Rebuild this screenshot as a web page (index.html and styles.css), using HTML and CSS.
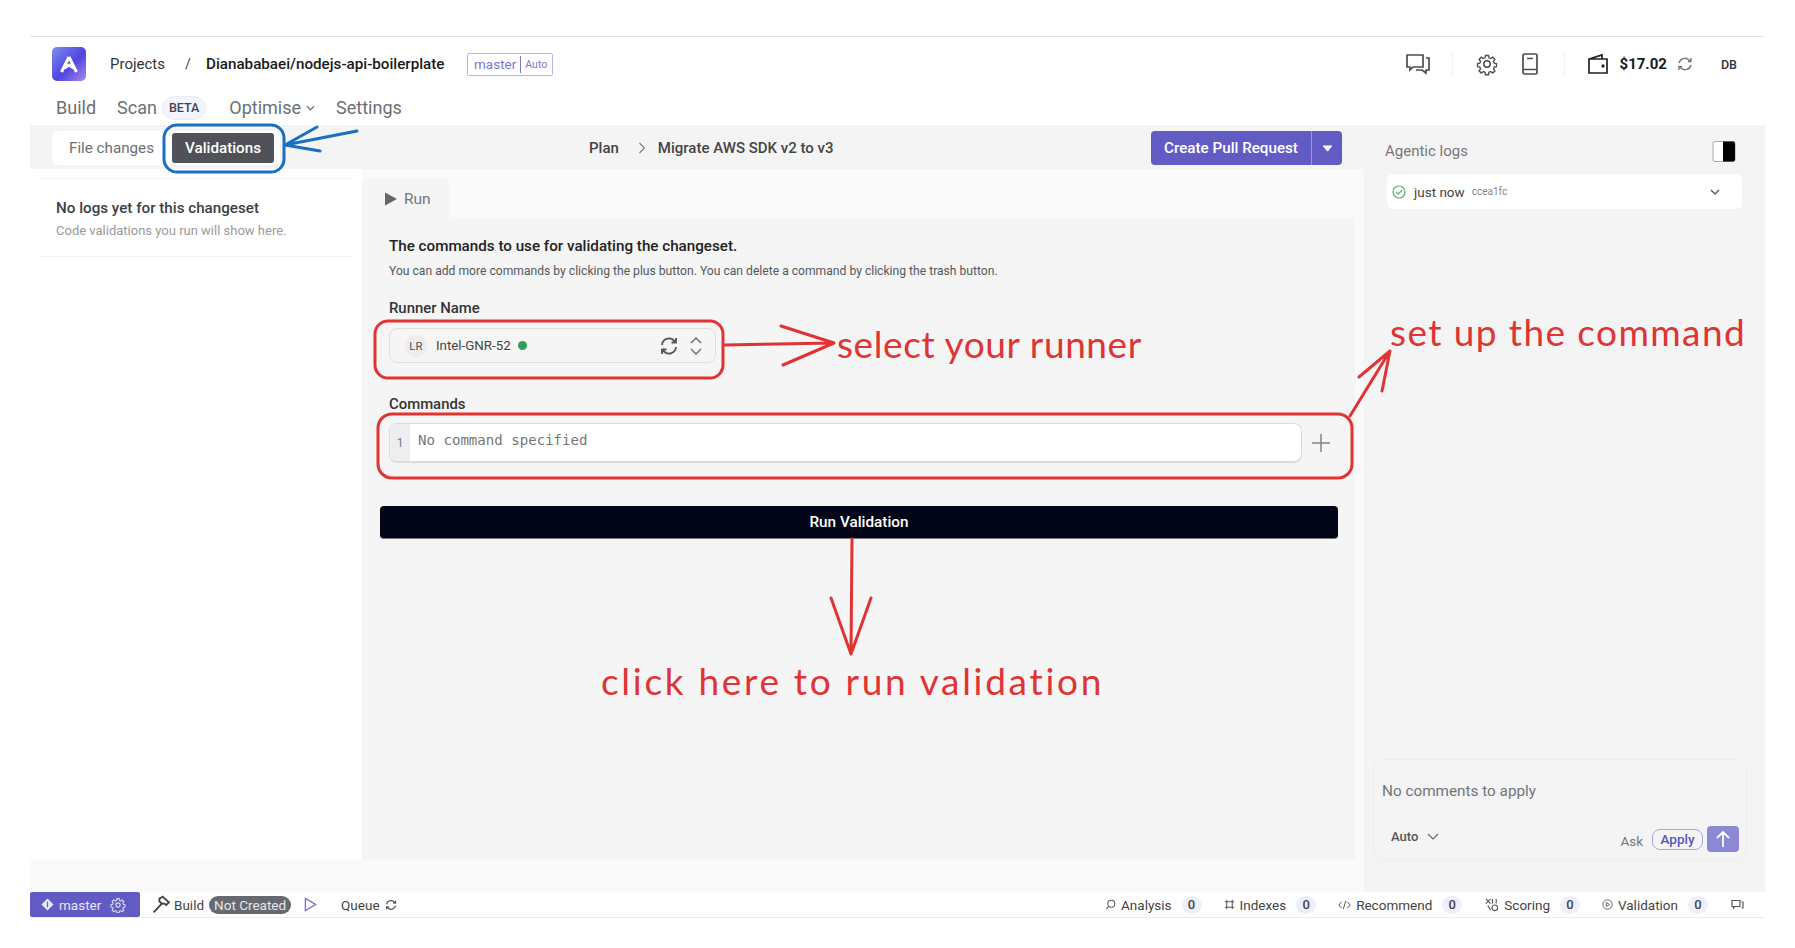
FILE: index.html
```html
<!DOCTYPE html>
<html lang="en">
<head>
<meta charset="utf-8">
<title>Validations</title>
<link rel="stylesheet" href="styles.css">
</head>
<body>
<div class="shell">
  <header class="topbar">
    <div class="logo">
      <svg viewBox="0 0 34 34" width="34" height="34"><defs><linearGradient id="lg" x1="0" y1="0" x2="1" y2="1"><stop offset="0" stop-color="#7f8df0"/><stop offset=".55" stop-color="#4f45e0"/><stop offset="1" stop-color="#a78bea"/></linearGradient></defs><rect width="34" height="34" rx="5" fill="url(#lg)"/><path d="M17 10 L24.500 25 M17 10 L9.500 25 M12.500 21 L17 18 L21.500 21" fill="none" stroke="#fff" stroke-width="3" stroke-linejoin="round"/></svg>
    </div>
    <span class="crumb">Projects</span>
    <span class="slash">/</span>
    <span class="repo">Dianababaei/nodejs-api-boilerplate</span>
    <span class="branch"><span class="branch-name">master</span><span class="branch-mode">Auto</span></span>
    <div class="top-actions">
      <svg class="ico-chat" viewBox="0 0 26 24" width="26" height="24" fill="none" stroke="#4a4d52" stroke-width="1.7"><path d="M2 3h16v12H8l-3 3v-3H2z"/><path d="M21 6h3v12h-3v3l-4-3h-6"/></svg>
      <span class="vline"></span>
      <svg class="ico-gear" viewBox="0 0 24 24" width="24" height="24" fill="none" stroke="#4a4d52" stroke-width="1.5"><circle cx="12" cy="12" r="3.2"/><path d="M10.3 2.5h3.4l.5 2.7 1.9.8 2.3-1.6 2.4 2.4-1.6 2.3.8 1.9 2.5.5v3.4l-2.5.5-.8 1.9 1.6 2.3-2.4 2.4-2.3-1.6-1.9.8-.5 2.7h-3.4l-.5-2.700-1.900-.8-2.300 1.600-2.400-2.400 1.600-2.300-.8-1.900-2.500-.5v-3.400l2.500-.5.8-1.900-1.600-2.300 2.400-2.400 2.300 1.600 1.900-.8z" transform="translate(1.2 1.2) scale(.9)"/></svg>
      <svg class="ico-book" viewBox="0 0 20 24" width="20" height="24" fill="none" stroke="#4a4d52" stroke-width="1.7"><rect x="3" y="2" width="14" height="20" rx="1.5"/><path d="M3 17.500h14M7 6.500h6"/></svg>
      <span class="vline vline-b"></span>
      <svg class="ico-wallet" viewBox="0 0 22 22" width="22" height="22" fill="none" stroke="#222" stroke-width="1.7"><path d="M2 6h18v14H2z M2 6 15 2v4"/><circle cx="16" cy="13" r=".8" fill="#222"/></svg>
      <span class="money">$17.02</span>
      <svg class="ico-sync" viewBox="0 0 16 16" width="16" height="16" fill="none" stroke="#777" stroke-width="1.4"><path d="M2 7a6 6 0 0 1 10-3l2 1.500M14 2v3.500h-3M14 9a6 6 0 0 1-10 3l-2-1.500M2 14v-3.500h3"/></svg>
      <span class="avatar">DB</span>
    </div>
  </header>

  <nav class="tabs">
    <span class="tab">Build</span>
    <span class="tab tab-scan">Scan</span>
    <span class="beta">BETA</span>
    <span class="tab tab-opt">Optimise</span>
    <svg class="chev-small" viewBox="0 0 10 6" width="9" height="6" fill="none" stroke="#666" stroke-width="1.3"><path d="M1 1l4 4 4-4"/></svg>
    <span class="tab tab-set">Settings</span>
  </nav>

  <div class="workspace">
    <div class="center">
      <div class="toolbar">
        <div class="segment">
          <span class="seg-item">File changes</span>
          <span class="seg-item seg-active">Validations</span>
        </div>
        <div class="path">
          <span>Plan</span>
          <svg viewBox="0 0 8 12" width="8" height="12" fill="none" stroke="#777" stroke-width="1.1"><path d="M1.500 1l5 5-5 5"/></svg>
          <span>Migrate AWS SDK v2 to v3</span>
        </div>
        <div class="pr">
          <span class="pr-main">Create Pull Request</span>
          <span class="pr-drop"><svg viewBox="0 0 12 8" width="11" height="7"><path d="M1 1h10L6 7z" fill="#fff" stroke="#fff" stroke-linejoin="round"/></svg></span>
        </div>
      </div>
      <div class="body">
        <aside class="logs">
          <div class="logs-inner">
            <div class="logs-title">No logs yet for this changeset</div>
            <div class="logs-sub">Code validations you run will show here.</div>
          </div>
        </aside>
        <main class="main">
          <div class="run-tab">
            <svg viewBox="0 0 14 14" width="14" height="14"><path d="M1 0.500 13 7 1 13.500z" fill="#666"/></svg>
            <span>Run</span>
          </div>
          <section class="panel">
            <h2 class="p-title">The commands to use for validating the changeset.</h2>
            <p class="p-sub">You can add more commands by clicking the plus button. You can delete a command by clicking the trash button.</p>
            <div class="label label-runner">Runner Name</div>
            <div class="select">
              <span class="lr">LR</span>
              <span class="runner">Intel-GNR-52</span>
              <span class="dot"></span>
              <svg class="sel-sync" viewBox="0 0 20 20" width="20" height="20" fill="none" stroke="#555" stroke-width="1.800"><path d="M3 9a7 7 0 0 1 12-4.500l2 2M17 2v4.500h-4.500M17 11a7 7 0 0 1-12 4.500l-2-2M3 18v-4.500h4.500"/></svg>
              <svg class="sel-updown" viewBox="0 0 12 20" width="12" height="20" fill="none" stroke="#666" stroke-width="1.300"><path d="M1 7l5-5 5 5M1 13l5 5 5-5"/></svg>
            </div>
            <div class="label label-cmd">Commands</div>
            <div class="cmd-row">
              <div class="editor">
                <span class="gutter">1</span>
                <span class="code">No command specified</span>
              </div>
              <svg class="plus" viewBox="0 0 18 18" width="18" height="18" fill="none" stroke="#80848c" stroke-width="1.500"><path d="M9 0v18M0 9h18"/></svg>
            </div>
            <button class="run-btn">Run Validation</button>
          </section>
        </main>
      </div>
    </div>

    <aside class="agent">
      <div class="agent-head">
        <span class="agent-title">Agentic logs</span>
        <svg viewBox="0 0 24 22" width="24" height="23"><rect x="1" y="1" width="22" height="20" rx="2" fill="#fff" stroke="#aaa"/><path d="M11 1h10a2 2 0 0 1 2 2v16a2 2 0 0 1-2 2H11z" fill="#000"/></svg>
      </div>
      <div class="log-card">
        <svg viewBox="0 0 14 14" width="14" height="14" fill="none" stroke="#5cb07a" stroke-width="1.200"><circle cx="7" cy="7" r="6"/><path d="M4 7l2.200 2.200L10 5"/></svg>
        <span class="log-when">just now</span>
        <span class="log-hash">ccea1fc</span>
        <svg class="log-chev" viewBox="0 0 10 6" width="10" height="6" fill="none" stroke="#555" stroke-width="1.400"><path d="M1 1l4 4 4-4"/></svg>
      </div>
      <div class="composer">
        <div class="composer-text">No comments to apply</div>
        <div class="composer-row">
          <span class="auto">Auto</span>
          <svg class="auto-chev" viewBox="0 0 12 7" width="12" height="7" fill="none" stroke="#666" stroke-width="1.200"><path d="M1 1l5 5 5-5"/></svg>
          <span class="ask">Ask</span>
          <span class="apply">Apply</span>
          <span class="send"><svg viewBox="0 0 16 18" width="16" height="18" fill="none" stroke="#fff" stroke-width="1.800"><path d="M8 17V2M2 8l6-6 6 6"/></svg></span>
        </div>
      </div>
    </aside>
  </div>

  <footer class="status">
    <div class="st-branch">
      <svg viewBox="0 0 14 14" width="13" height="13"><path d="M7 0.500 13.500 7 7 13.500 0.500 7z" fill="#e8e6fa"/><path d="M7 4v6" stroke="#625bc4" stroke-width="1.300"/></svg>
      <span class="st-master">master</span>
      <svg class="st-gear" viewBox="0 0 24 24" width="16" height="16" fill="none" stroke="#d8d6f4" stroke-width="1.700"><circle cx="12" cy="12" r="3.200"/><path d="M10.300 2.500h3.400l.5 2.700 1.900.8 2.300-1.600 2.400 2.400-1.600 2.300.8 1.900 2.500.5v3.400l-2.500.5-.8 1.900 1.600 2.300-2.400 2.400-2.300-1.600-1.900.8-.5 2.700h-3.400l-.5-2.700-1.900-.8-2.300 1.600-2.400-2.400 1.600-2.300-.8-1.900-2.500-.5v-3.400l2.500-.5.8-1.900-1.600-2.300 2.400-2.400 2.300 1.600 1.900-.8z"/></svg>
    </div>
    <svg class="st-hammer" viewBox="0 0 18 18" width="19" height="19" fill="none" stroke="#444" stroke-width="1.800"><path d="M1.500 16.500 10 7.500M7 3.500l3-2 6 5.500-2.500 2.500-2-1.500-2 .5-2.500-2.500z"/></svg>
    <span class="st-build">Build</span>
    <span class="st-pill">Not Created</span>
    <svg class="st-play" viewBox="0 0 14 16" width="13" height="15" fill="none" stroke="#7a73d8" stroke-width="1.500"><path d="M1.500 1.500 12.500 8 1.500 14.500z"/></svg>
    <span class="st-queue">Queue</span>
    <svg class="st-sync" viewBox="0 0 16 16" width="12" height="12" fill="none" stroke="#555" stroke-width="1.600"><path d="M2 7a6 6 0 0 1 10-3l2 1.500M14 2v3.500h-3M14 9a6 6 0 0 1-10 3l-2-1.500M2 14v-3.500h3"/></svg>
    <div class="st-right">
      <span class="st-item"><svg viewBox="0 0 14 14" width="11" height="11" fill="none" stroke="#555" stroke-width="1.300"><circle cx="8" cy="6" r="4.500"/><path d="M5 9.500 1.500 13"/></svg>Analysis<b class="count">0</b></span>
      <span class="st-item"><svg viewBox="0 0 14 14" width="11" height="11" fill="none" stroke="#555" stroke-width="1.300"><path d="M3.500 1v12M10.500 1v12M1 3.500h12M1 10.500h12"/></svg>Indexes<b class="count">0</b></span>
      <span class="st-item"><svg viewBox="0 0 16 12" width="13" height="10" fill="none" stroke="#555" stroke-width="1.200"><path d="M4.500 2 1 6l3.500 4M11.500 2 15 6l-3.500 4M9.500 1l-3 10"/></svg>Recommend<b class="count">0</b></span>
      <span class="st-item"><svg viewBox="0 0 16 16" width="15" height="15" fill="none" stroke="#555" stroke-width="1.200"><path d="M2 2l5 5M7 2 2 7M4 9l3 5M9 2v5M13 2v5"/><circle cx="11.500" cy="11.500" r="3"/></svg>Scoring<b class="count">0</b></span>
      <span class="st-item"><svg viewBox="0 0 14 14" width="11" height="11" fill="none" stroke="#555" stroke-width="1.100"><circle cx="7" cy="7" r="6"/><path d="M5.500 4.500 9.500 7l-4 2.500z"/></svg>Validation<b class="count">0</b></span>
      <svg class="st-chat" viewBox="0 0 26 24" width="13" height="12" fill="none" stroke="#555" stroke-width="2.400"><path d="M2 3h16v12H8l-3 3v-3H2z"/><path d="M21 6h3v12h-3"/></svg>
    </div>
  </footer>
</div>

<div class="notes">
  <svg class="notes-svg" viewBox="0 0 1795 948" width="1795" height="948" fill="none" stroke-linecap="round" stroke-linejoin="round">
    <rect class="n-blue" x="164" y="125" width="120" height="47" rx="13"/>
    <path class="n-blue" d="M357 131 285 145M317 127 285 145 320 151"/>
    <rect class="n-red" x="375" y="321" width="348" height="57" rx="13"/>
    <path class="n-red" d="M724 345 834 343M781 326 834 343 783 365"/>
    <rect class="n-red" x="378" y="414" width="974" height="64" rx="14"/>
    <path class="n-red" d="M1350 416 1390 351M1359 377 1390 351 1382 391"/>
    <path class="n-red" d="M852 539 851 654M831 598 851 654 871 598"/>
  </svg>
  <div class="note note-runner">select your runner</div>
  <div class="note note-cmd">set up the command</div>
  <div class="note note-run">click here to run validation</div>
</div>
</body>
</html>
```
FILE: styles.css
```css
* { box-sizing: border-box; }
html, body { margin: 0; height: 100%; }
body {
  background: #fff;
  font-family: Roboto, "Liberation Sans", sans-serif;
  color: #222;
  overflow: hidden;
  position: relative;
}
.shell { margin: 36px 30px 0; width: 1735px; border-top: 1px solid #e4e4e4; }

/* top bar */
.topbar { display: flex; align-items: center; height: 51px; padding-left: 22px; padding-top: 3px; }
.logo { width: 34px; height: 34px; margin-right: 24px; }
.logo svg { display: block; }
.crumb { font-size: 15px; color: #333; width: 75px; }
.slash { font-size: 14px; color: #444; width: 21px; }
.repo { font-size: 15.200px; font-weight: 500; color: #1a1a1a; width: 261px; white-space: nowrap; }
.branch { display: flex; align-items: center; height: 23px; border: 1px solid #b9b5ec; border-radius: 2px; padding: 0 5px 0 6px; background: #fff; }
.branch-name { font-size: 13.500px; color: #7b75d6; padding-right: 4px; border-right: 1px solid #7b75d6; line-height: 17px; }
.branch-mode { font-size: 10.500px; color: #7b75d6; padding-left: 4px; }
.top-actions { margin-left: auto; display: flex; align-items: center; padding-right: 28px; }
.vline { width: 1px; height: 24px; background: #f0f0f0; margin: 0 22px 0 21px; }
.vline-b { margin: 0 22px 0 24px; }
.ico-gear { margin-right: 21px; }
.money { font-size: 15px; font-weight: 700; margin: 0 10px 0 11px; color: #1a1a1a; }
.avatar { font-size: 12.500px; font-weight: 500; margin-left: 28px; color: #333; }

/* tabs */
.tabs { display: flex; align-items: center; height: 37px; padding-left: 26px; padding-top: 2px; }
.tab { font-size: 18px; color: #6b6f76; }
.tab-scan { margin-left: 21px; }
.beta { font-size: 12.500px; font-weight: 500; color: #3f4257; background: #f4f4fc; border: 1px solid #ececf7; border-radius: 12px; padding: 3px 6px; margin-left: 5px; line-height: 16px; }
.tab-opt { margin-left: 23px; }
.chev-small { margin-left: 5px; }
.tab-set { margin-left: 21px; }

/* workspace */
.workspace { display: grid; grid-template-columns: 1334px 401px; height: 767px; }
.center { background: #fafafa; display: flex; flex-direction: column; }
.toolbar { background: #f4f4f4; height: 44px; display: flex; align-items: center; padding: 2px 0 0 22px; position: relative; flex: none; }
.segment { display: flex; align-items: center; width: 228px; height: 34px; background: #fff; border-radius: 6px; padding-left: 17px; }
.seg-item { font-size: 15.200px; color: #6b6f76; }
.seg-active { margin-left: 18px; width: 102px; height: 30px; line-height: 30px; text-align: center; background: #505258; color: #fff; border-radius: 3px; font-weight: 500; }
.path { display: flex; align-items: center; font-size: 15px; font-weight: 500; color: #444; margin-left: 309px; }
.path svg { margin: 0 12px 0 19px; }
.pr { display: flex; height: 34px; margin-left: auto; margin-right: 22px; background: #625bc4; border-radius: 4px; color: #fff; font-size: 15.200px; font-weight: 500; line-height: 34px; }
.pr-main { width: 161px; text-align: center; border-right: 1px solid #9b96dd; }
.pr-drop { width: 30px; display: flex; align-items: center; justify-content: center; }

.body { display: grid; grid-template-columns: 332px 993px; height: 691px; }
.logs { background: #fff; padding: 9px 8px 0; }
.logs-inner { border-top: 1px solid #f2f2f2; border-bottom: 1px solid #f2f2f2; height: 79px; padding: 19px 18px 0; }
.logs-title { font-size: 15.200px; font-weight: 500; color: #3c3f44; line-height: 20px; }
.logs-sub { font-size: 13px; color: #9a9a9a; line-height: 20px; margin-top: 3px; }
.main { display: flex; flex-direction: column; padding-top: 9px; }
.run-tab { width: 87px; height: 39px; background: #f5f5f5; border-radius: 6px 6px 0 0; display: flex; align-items: center; gap: 6px; padding: 2px 0 0 22px; font-size: 15.500px; color: #777; flex: none; }
.panel { background: #f5f5f5; flex: 1; padding: 19px 17px 0 27px; }
.p-title { margin: 0; font-size: 15.200px; font-weight: 500; line-height: 20px; color: #222; }
.p-sub { margin: 6px 0 0; font-size: 12.140px; line-height: 18px; color: #55585e; }
.label { font-size: 14.900px; font-weight: 500; line-height: 20px; color: #333; }
.label-runner { margin-top: 18px; }
.label-cmd { margin-top: 31px; }
.select { display: flex; align-items: center; width: 327px; height: 35px; margin-top: 10px; border: 1px solid #dedede; border-radius: 8px; padding: 0 13px 0 15px; }
.lr { width: 22px; height: 22px; border-radius: 50%; background: #ececec; font-size: 11.500px; text-align: center; line-height: 22px; color: #555; }
.runner { font-size: 13.300px; color: #444; margin-left: 9px; }
.dot { width: 9px; height: 9px; border-radius: 50%; background: #2f9e5b; margin-left: 7px; }
.sel-sync { margin-left: auto; }
.sel-updown { margin-left: 11px; }
.cmd-row { display: flex; align-items: center; margin-top: 9px; }
.editor { display: flex; width: 913px; height: 40px; background: #fff; border: 1px solid #dcdcdc; border-bottom-width: 2px; border-radius: 8px; overflow: hidden; }
.gutter { width: 20px; background: #eceef0; color: #777; font-size: 12px; text-align: center; line-height: 38px; flex: none; }
.code { font-family: "DejaVu Sans Mono", "Liberation Mono", monospace; font-size: 14.080px; color: #777; padding: 7px 0 0 8px; line-height: 18px; }
.plus { margin-left: 10px; margin-top: -1px; }
.run-btn { display: block; width: 958px; height: 33px; margin: 43px 0 0 -9px; background: #020617; color: #fff; border: 0; border-bottom: 1px solid #777; border-radius: 4px; font-family: inherit; font-size: 15.300px; font-weight: 500; padding: 0; }

/* right */
.agent { background: #f4f4f4; display: flex; flex-direction: column; padding: 0 23px 32px 21px; margin: 0; }
.agent-head { display: flex; align-items: center; justify-content: space-between; height: 49px; padding-right: 6px; flex: none; padding-top: 3px; }
.agent-title { font-size: 15px; color: #777; }
.log-card { display: flex; align-items: center; height: 35px; background: #fff; border-radius: 6px; padding: 0 22px 0 5px; margin: 0 0 0 2px; flex: none; }
.log-when { font-size: 13.500px; color: #444; margin-left: 8px; }
.log-hash { font-size: 10px; color: #888; margin-left: 7px; }
.log-chev { margin-left: auto; }
.composer { margin: auto -5px 0 -12px; height: 101px; border: 1px solid #eeeeee; border-radius: 8px; padding: 22px 7px 0 8px; }
.composer-text { font-size: 15.300px; color: #70747a; line-height: 18px; }
.composer-row { display: flex; align-items: center; margin-top: 21px; padding-left: 9px; }
.auto { font-size: 13px; font-weight: 500; color: #555; }
.auto-chev { margin-left: 9px; }
.ask { margin-left: auto; font-size: 13.500px; color: #777; margin-top: 8px; }
.apply { width: 51px; height: 21px; margin-left: 9px; border: 1px solid #aaa6e4; border-radius: 8px; color: #5a53c0; font-size: 13.500px; font-weight: 500; text-align: center; line-height: 19px; margin-top: 6px; }
.send { width: 32px; height: 26px; margin-left: 4px; background: #8d88d6; border-radius: 4px; display: flex; align-items: center; justify-content: center; margin-top: 5px; }

/* status */
.status { display: flex; align-items: center; height: 26px; border-bottom: 1px solid #ececec; font-size: 13.500px; color: #444; }
.st-branch { display: flex; align-items: center; width: 110px; height: 25px; background: #625bc4; border-radius: 2px; padding-left: 11px; color: #e8e6fa; }
.st-master { margin-left: 5px; }
.st-gear { margin-left: 9px; }
.st-hammer { margin-left: 12px; }
.st-build { margin-left: 3px; }
.st-pill { background: #666a70; color: #e6e6e6; border-radius: 9px; height: 18px; line-height: 18px; padding: 0 5px; margin-left: 5px; }
.st-play { margin-left: 13px; }
.st-queue { margin-left: 24px; }
.st-sync { margin-left: 5px; }
.st-right { margin-left: auto; display: flex; align-items: center; padding-right: 21px; }
.st-item { display: flex; align-items: center; gap: 3px; margin-right: 22px; }
.st-item svg { margin-right: 2px; }
.count { width: 20px; height: 18px; margin-left: 7px; border-radius: 50%; background: #eeedfb; text-align: center; font-weight: 500; font-size: 13px; line-height: 18px; color: #444; }
.st-chat { margin-left: 1px; }

/* hand-drawn annotations over the screenshot */
.notes { position: absolute; left: 0; top: 0; width: 1795px; height: 948px; pointer-events: none; }
.notes-svg { position: absolute; left: 0; top: 0; }
.n-blue { stroke: #1a6fc0; stroke-width: 3; }
.n-red { stroke: #e03434; stroke-width: 3; }
.note { position: absolute; color: #e03434; font-family: Lato, "Noto Sans", sans-serif; font-size: 37px; line-height: 44px; white-space: nowrap; }
.note-runner { left: 837px; top: 322px; letter-spacing: .6px; }
.note-cmd { left: 1390px; top: 310px; letter-spacing: 1.400px; }
.note-run { left: 601px; top: 659px; letter-spacing: 2.700px; }
```
